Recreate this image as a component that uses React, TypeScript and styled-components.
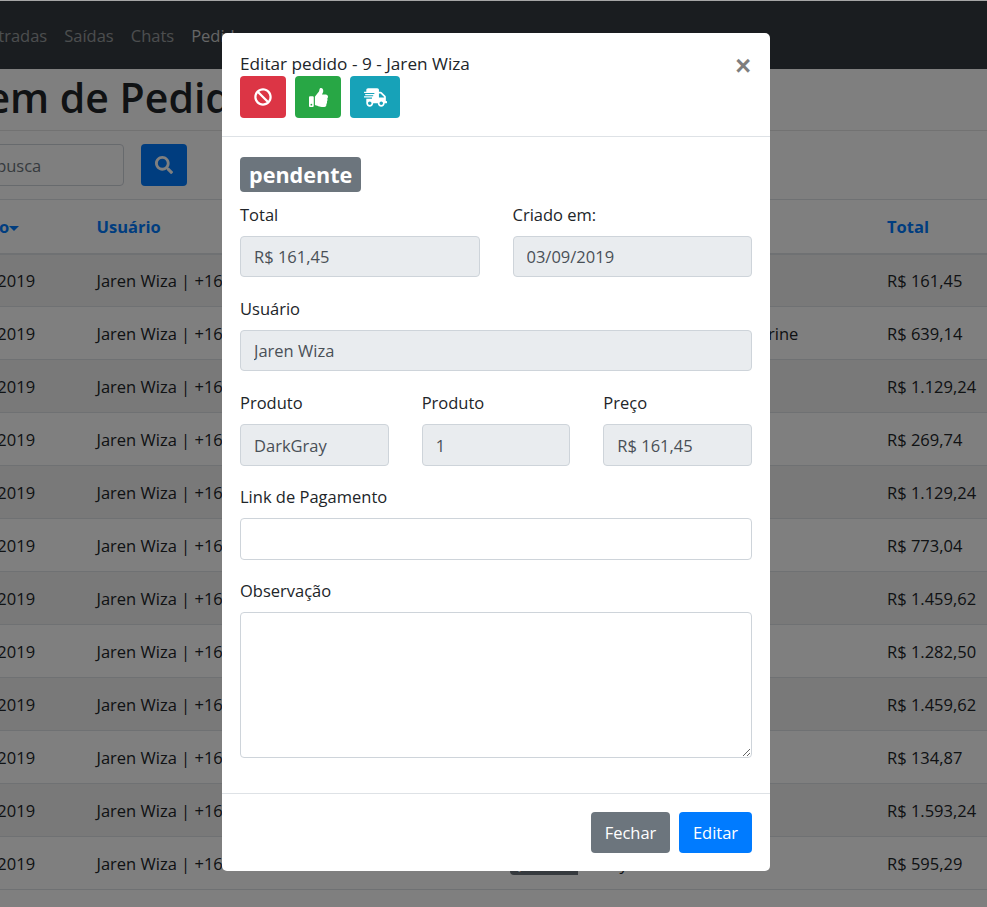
import React from "react";
import styled, { createGlobalStyle } from "styled-components";
import { FaBan, FaThumbsUp, FaShippingFast, FaSearch } from "react-icons/fa";

const GlobalStyle = createGlobalStyle`
html, body {
  margin: 0;
  padding: 0;
  background: #fff;
}
* {
  box-sizing: border-box;
}
body {
  font: 16.5px/27px "Open Sans", Lato, sans-serif;
  color: #212529;
}
`;

const Screen = styled.div`
position: relative;
width: 987px;
height: 907px;
overflow: hidden;
border-top: 1px solid #a6a6a6;
`;

const Navbar = styled.nav`
background: #343a40;
height: 68px;
display: flex;
align-items: center;
gap: 17px;
margin-left: -21px;
`;

const NavLink = styled.a<{ $active?: boolean }>`
color: ${(p) => (p.$active ? "rgba(255,255,255,.75)" : "rgba(255,255,255,.5)")};
white-space: nowrap;
`;

const Page = styled.div`
margin-left: -116px;
width: 1103px;
`;

const PageTitle = styled.h1`
font-size: 41px;
line-height: 49px;
font-weight: 600;
margin: 4px 0 0;
padding-bottom: 8px;
padding-left: 0;
text-indent: -14px;
white-space: nowrap;
border-bottom: 1px solid rgba(0, 0, 0, 0.1);
`;

const SearchRow = styled.div`
display: flex;
gap: 17px;
margin: 13px 0 13px;
`;

const SearchInput = styled.input`
width: 240px;
height: 42px;
border: 1px solid #ced4da;
border-radius: 4px;
padding: 0 14px 0 31px;
font: inherit;
color: #495057;
&::placeholder {
  color: #6c757d;
}
`;

const SearchButton = styled.button`
width: 46px;
height: 42px;
border: 0;
border-radius: 4px;
background: #007bff;
color: #fff;
display: flex;
align-items: center;
justify-content: center;
font-size: 18px;
`;

const Table = styled.table`
table-layout: fixed;
border-collapse: collapse;
width: 1053px;
margin-left: 50px;
`;

const Th = styled.th<{ $w: number }>`
width: ${(p) => p.$w}px;
height: 54px;
padding: 0 13.5px;
text-align: left;
color: #007bff;
font-weight: 700;
border-top: 1px solid #dee2e6;
border-bottom: 2px solid #dee2e6;
white-space: nowrap;
`;

const Caret = styled.span`
display: inline-block;
border-left: 5.5px solid transparent;
border-right: 5.5px solid transparent;
border-top: 5.5px solid #007bff;
vertical-align: middle;
`;

const Tr = styled.tr`
&:nth-child(odd) {
  background: rgba(0, 0, 0, 0.05);
}
`;

const Td = styled.td`
height: 53px;
padding: 0 13.5px;
border-bottom: 1px solid #dee2e6;
white-space: nowrap;
overflow: hidden;
`;

const StatusBadge = styled.span`
display: inline-block;
background: #6c757d;
color: #fff;
border-radius: 4px;
font-size: 12px;
font-weight: 700;
line-height: 20px;
padding: 0 8px;
vertical-align: middle;
`;

const Overlay = styled.div`
position: absolute;
inset: 0;
background: rgba(0, 0, 0, 0.5);
`;

const Modal = styled.div`
width: 548px;
height: 838px;
margin: 32px 0 0 222px;
background: #fff;
border-radius: 5px;
display: flex;
flex-direction: column;
`;

const ModalHeader = styled.div`
position: relative;
padding: 18px;
border-bottom: 1px solid #dee2e6;
height: 104px;
`;

const ModalTitle = styled.div`
font-size: 17.2px;
line-height: 25px;
`;

const CloseButton = styled.button`
position: absolute;
top: 15px;
right: 19px;
border: 0;
background: none;
padding: 0;
font: 700 27px/36px "Liberation Sans", sans-serif;
color: #000;
opacity: 0.5;
`;

const ActionRow = styled.div`
display: flex;
gap: 9px;
`;

const ActionButton = styled.button<{ $bg: string; $w: number }>`
width: ${(p) => p.$w}px;
height: 42px;
border: 0;
border-radius: 4px;
background: ${(p) => p.$bg};
color: #fff;
display: flex;
align-items: center;
justify-content: center;
padding: 0;
`;

const ModalBody = styled.div`
padding: 20px 18px 0;
flex: 1;
`;

const PendingBadge = styled.div`
display: inline-block;
background: #6c757d;
color: #fff;
border-radius: 4px;
font-size: 21.6px;
font-weight: 700;
line-height: 36px;
height: 35px;
padding: 0 9px;
margin-bottom: 9px;
vertical-align: top;
`;

const FieldRow = styled.div<{ $cols: number }>`
display: grid;
grid-template-columns: repeat(${(p) => p.$cols}, 1fr);
column-gap: 33px;
`;

const Field = styled.div`
min-height: 94px;
`;

const Label = styled.label`
display: block;
margin-bottom: 8px;
line-height: 27px;
`;

const Input = styled.input<{ $h?: number }>`
display: block;
width: 100%;
height: ${(p) => p.$h ?? 41}px;
border: 1px solid #ced4da;
border-radius: 4px;
padding: 0 13px;
font: inherit;
color: #495057;
background: #fff;
&:disabled {
  background: #e9ecef;
}
`;

const TextArea = styled.textarea`
display: block;
width: 100%;
height: 146px;
border: 1px solid #ced4da;
border-radius: 4px;
padding: 7px 13px;
font: inherit;
color: #495057;
`;

const ModalFooter = styled.div`
border-top: 1px solid #dee2e6;
padding: 18px;
display: flex;
justify-content: flex-end;
gap: 9px;
`;

const FooterButton = styled.button<{ $bg: string; $w: number }>`
width: ${(p) => p.$w}px;
height: 41px;
border: 0;
border-radius: 4px;
padding: 0;
background: ${(p) => p.$bg};
color: #fff;
font: inherit;
`;

const rows = [
  ["Aqua", "R$ 161,45"],
  ["Violet, Sienna, Aquamarine", "R$ 639,14"],
  ["Gold", "R$ 1.129,24"],
  ["Khaki", "R$ 269,74"],
  ["Gold", "R$ 1.129,24"],
  ["Plum", "R$ 773,04"],
  ["Navy", "R$ 1.459,62"],
  ["Sienna", "R$ 1.282,50"],
  ["Navy", "R$ 1.459,62"],
  ["Teal", "R$ 134,87"],
  ["Salmon", "R$ 1.593,24"],
  ["Gray", "R$ 595,29"],
];

const App = () => {
  return (
    <Screen>
      <GlobalStyle />
      <Navbar>
        <NavLink>Entradas</NavLink>
        <NavLink>Saídas</NavLink>
        <NavLink>Chats</NavLink>
        <NavLink $active>Pedidos</NavLink>
      </Navbar>
      <Page>
        <PageTitle>Listagem de Pedidos</PageTitle>
        <SearchRow>
          <SearchInput placeholder="Digite sua busca" />
          <SearchButton><FaSearch /></SearchButton>
        </SearchRow>
        <Table>
          <thead>
            <tr>
              <Th $w={149}>Criação<Caret /></Th>
              <Th $w={413}>Usuário</Th>
              <Th $w={82}>Status</Th>
              <Th $w={295.5}>Produtos</Th>
              <Th $w={113.5}>Total</Th>
            </tr>
          </thead>
          <tbody>
            {rows.map(([produtos, total], i) => (
              <Tr key={i}>
                <Td>03/09/2019</Td>
                <Td>Jaren Wiza | +16 99999-0000</Td>
                <Td><StatusBadge>pendente</StatusBadge></Td>
                <Td>{produtos}</Td>
                <Td>{total}</Td>
              </Tr>
            ))}
          </tbody>
        </Table>
      </Page>
      <Overlay>
        <Modal>
          <ModalHeader>
            <ModalTitle>Editar pedido - 9 - Jaren Wiza</ModalTitle>
            <CloseButton>×</CloseButton>
            <ActionRow>
              <ActionButton $bg="#dc3545" $w={46}><FaBan size={18} /></ActionButton>
              <ActionButton $bg="#28a745" $w={46}><FaThumbsUp size={19} /></ActionButton>
              <ActionButton $bg="#17a2b8" $w={50}><FaShippingFast size={23} /></ActionButton>
            </ActionRow>
          </ModalHeader>
          <ModalBody>
            <PendingBadge>pendente</PendingBadge>
            <FieldRow $cols={2}>
              <Field>
                <Label>Total</Label>
                <Input disabled value="R$ 161,45" />
              </Field>
              <Field>
                <Label>Criado em:</Label>
                <Input disabled value="03/09/2019" />
              </Field>
            </FieldRow>
            <Field>
              <Label>Usuário</Label>
              <Input disabled value="Jaren Wiza" />
            </Field>
            <FieldRow $cols={3}>
              <Field>
                <Label>Produto</Label>
                <Input $h={42} disabled value="DarkGray" />
              </Field>
              <Field>
                <Label>Produto</Label>
                <Input $h={42} disabled value="1" />
              </Field>
              <Field>
                <Label>Preço</Label>
                <Input $h={42} disabled value="R$ 161,45" />
              </Field>
            </FieldRow>
            <Field>
              <Label>Link de Pagamento</Label>
              <Input $h={42} />
            </Field>
            <Field>
              <Label>Observação</Label>
              <TextArea />
            </Field>
          </ModalBody>
          <ModalFooter>
            <FooterButton $bg="#6c757d" $w={79}>Fechar</FooterButton>
            <FooterButton $bg="#007bff" $w={73}>Editar</FooterButton>
          </ModalFooter>
        </Modal>
      </Overlay>
    </Screen>
  );
};

export default App;
